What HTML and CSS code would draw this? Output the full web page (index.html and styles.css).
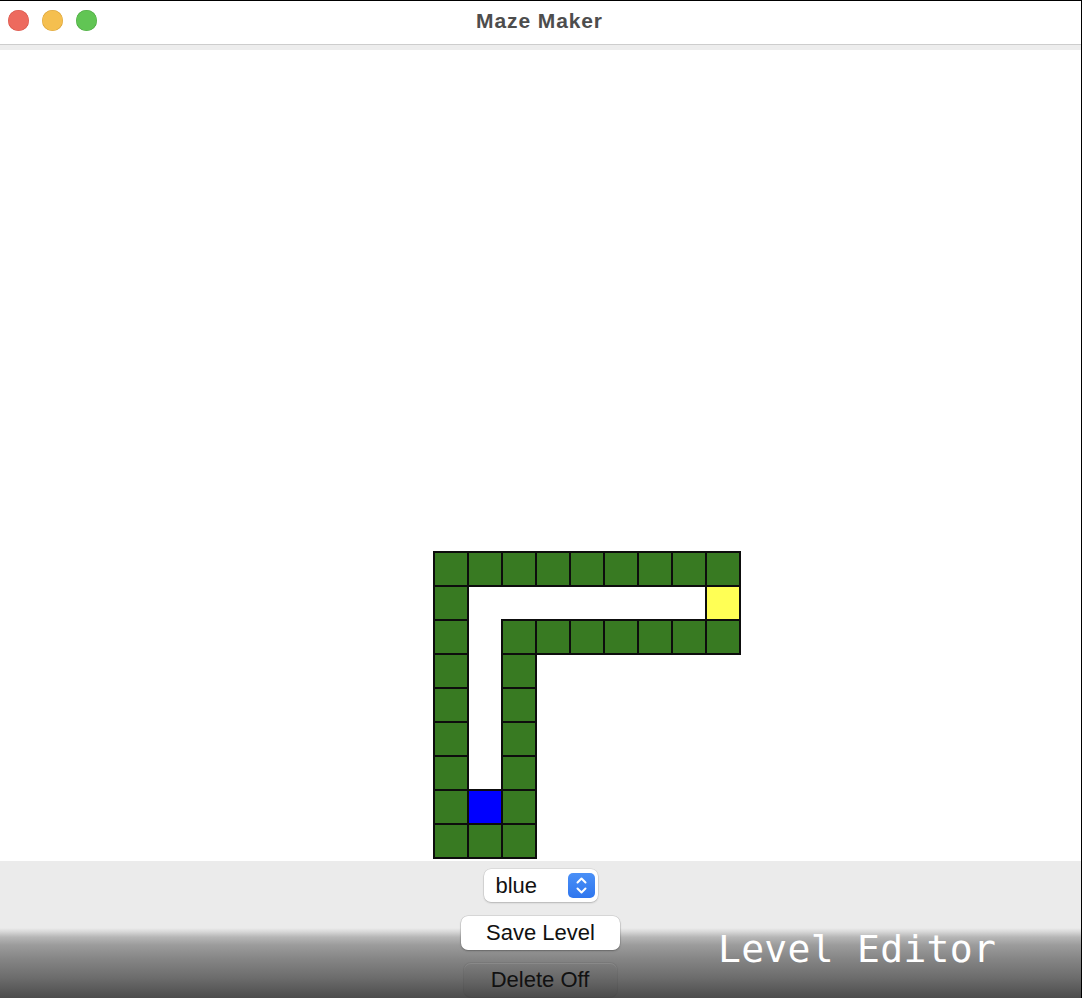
FILE: index.html
```html
<!DOCTYPE html>
<html>
<head>
<meta charset="utf-8">
<title>Maze Maker</title>
<link rel="stylesheet" href="styles.css">
</head>
<body>
<div class="window">
  <header class="titlebar">
    <div class="lights">
      <span class="light red"></span>
      <span class="light yellow"></span>
      <span class="light green"></span>
    </div>
    <div class="title">Maze Maker</div>
  </header>
  <div class="band"></div>
  <main class="canvas">
    <div class="maze">
      <div class="c g"></div><div class="c g"></div><div class="c g"></div><div class="c g"></div><div class="c g"></div><div class="c g"></div><div class="c g"></div><div class="c g"></div><div class="c g"></div>
      <div class="c g"></div><div class="c"></div><div class="c"></div><div class="c"></div><div class="c"></div><div class="c"></div><div class="c"></div><div class="c"></div><div class="c y"></div>
      <div class="c g"></div><div class="c"></div><div class="c g"></div><div class="c g"></div><div class="c g"></div><div class="c g"></div><div class="c g"></div><div class="c g"></div><div class="c g"></div>
      <div class="c g"></div><div class="c"></div><div class="c g"></div><div class="c"></div><div class="c"></div><div class="c"></div><div class="c"></div><div class="c"></div><div class="c"></div>
      <div class="c g"></div><div class="c"></div><div class="c g"></div><div class="c"></div><div class="c"></div><div class="c"></div><div class="c"></div><div class="c"></div><div class="c"></div>
      <div class="c g"></div><div class="c"></div><div class="c g"></div><div class="c"></div><div class="c"></div><div class="c"></div><div class="c"></div><div class="c"></div><div class="c"></div>
      <div class="c g"></div><div class="c"></div><div class="c g"></div><div class="c"></div><div class="c"></div><div class="c"></div><div class="c"></div><div class="c"></div><div class="c"></div>
      <div class="c g"></div><div class="c b"></div><div class="c g"></div><div class="c"></div><div class="c"></div><div class="c"></div><div class="c"></div><div class="c"></div><div class="c"></div>
      <div class="c g"></div><div class="c g"></div><div class="c g"></div><div class="c"></div><div class="c"></div><div class="c"></div><div class="c"></div><div class="c"></div><div class="c"></div>
    </div>
  </main>
  <footer class="panel">
    <div class="controls">
      <div class="select">
        <span class="select-text">blue</span>
        <span class="stepper">
          <svg width="27" height="25" viewBox="0 0 27 25">
            <path d="M9.5 9.5 L13.5 5.5 L17.5 9.5" fill="none" stroke="#fff" stroke-width="2" stroke-linecap="round" stroke-linejoin="round"/>
            <path d="M9.5 15.5 L13.5 19.5 L17.5 15.5" fill="none" stroke="#fff" stroke-width="2" stroke-linecap="round" stroke-linejoin="round"/>
          </svg>
        </span>
      </div>
      <button class="btn save">Save Level</button>
      <button class="btn delete">Delete Off</button>
    </div>
    <div class="label">Level Editor</div>
  </footer>
</div>
</body>
</html>
```

FILE: styles.css
```css
* { box-sizing: border-box; }
html, body {
  margin: 0;
  padding: 0;
  width: 1082px;
  height: 998px;
  overflow: hidden;
  background: #fff;
}
.window {
  width: 1082px;
  height: 998px;
  border-top: 1px solid #000;
  border-right: 1px solid #000;
  display: flex;
  flex-direction: column;
  font-family: "Liberation Sans", Arial, sans-serif;
}
.titlebar {
  height: 44px;
  flex: none;
  background: #fff;
  border-bottom: 1px solid #cdcdcd;
  position: relative;
  display: flex;
  align-items: center;
  justify-content: center;
}
.lights {
  position: absolute;
  left: 8px;
  top: 9px;
  display: flex;
  gap: 13px;
}
.light {
  width: 21px;
  height: 21px;
  border-radius: 50%;
  display: block;
}
.red { background: #ed6a5e; box-shadow: inset 0 0 0 0.5px #d6574c; }
.yellow { background: #f5bf4f; box-shadow: inset 0 0 0 0.5px #d9a33c; }
.green { background: #61c554; box-shadow: inset 0 0 0 0.5px #4ea843; }
.title {
  font-weight: bold;
  font-size: 21px;
  letter-spacing: 0.9px;
  color: #4d4d4d;
  margin-top: -4px;
  margin-left: -2px;
}
.band {
  height: 5px;
  flex: none;
  background: #ededed;
}
.canvas {
  height: 811px;
  flex: none;
  background: #fff;
  display: flex;
  align-items: flex-end;
  padding-left: 434px;
  padding-bottom: 3px;
}
.maze {
  display: grid;
  grid-template-columns: repeat(9, 34px);
  grid-template-rows: repeat(9, 34px);
}
.c { width: 34px; height: 34px; }
.c.g, .c.y, .c.b {
  border: 1px solid #0d0d0d;
  box-shadow: 0 0 0 1px #0d0d0d;
}
.g { background: #387a22; }
.y { background: #ffff55; }
.b { background: #0000ff; }
.panel {
  flex: 1;
  position: relative;
  background: linear-gradient(to bottom,
    #ebebeb 0px, #ebebeb 67px, #d6d6d6 71px, #b6b6b6 76px, #9c9c9c 84px,
    #858585 98px, #6c6c6c 117px, #4c4c4c 137px);
}
.controls {
  display: flex;
  flex-direction: column;
  align-items: center;
  padding-top: 8px;
}
.select {
  width: 114px;
  height: 33px;
  background: #fff;
  border-radius: 7px;
  box-shadow: 0 0 0 0.5px rgba(0,0,0,0.12), 0 1px 2px rgba(0,0,0,0.18);
  display: flex;
  align-items: center;
  justify-content: space-between;
  padding: 0 3px 0 12px;
}
.select-text {
  font-size: 22px;
  color: #111;
  margin-top: 1px;
}
.stepper {
  width: 27px;
  height: 25px;
  border-radius: 5px;
  background: linear-gradient(#4a90f7, #2f76ee);
  display: block;
}
.stepper svg { display: block; }
.btn {
  font-family: "Liberation Sans", Arial, sans-serif;
  font-size: 22px;
  color: #111;
  border: none;
  padding: 0;
  height: 34px;
  border-radius: 7px;
  display: block;
}
.save {
  margin-top: 14px;
  width: 159px;
  background: #fff;
  box-shadow: 0 0 0 0.5px rgba(0,0,0,0.15), 0 1px 2px rgba(0,0,0,0.25);
}
.delete {
  margin-top: 13px;
  width: 153px;
  margin-left: -1px;
  background: rgba(0,0,0,0.02);
  box-shadow: inset 0 1px 0 rgba(255,255,255,0.1), 0 0 0 1px rgba(0,0,0,0.06);
}
.label {
  position: absolute;
  left: 718px;
  top: 66px;
  font-family: "DejaVu Sans Mono", monospace;
  font-size: 38px;
  letter-spacing: 0.3px;
  color: #fff;
  white-space: nowrap;
}
```
